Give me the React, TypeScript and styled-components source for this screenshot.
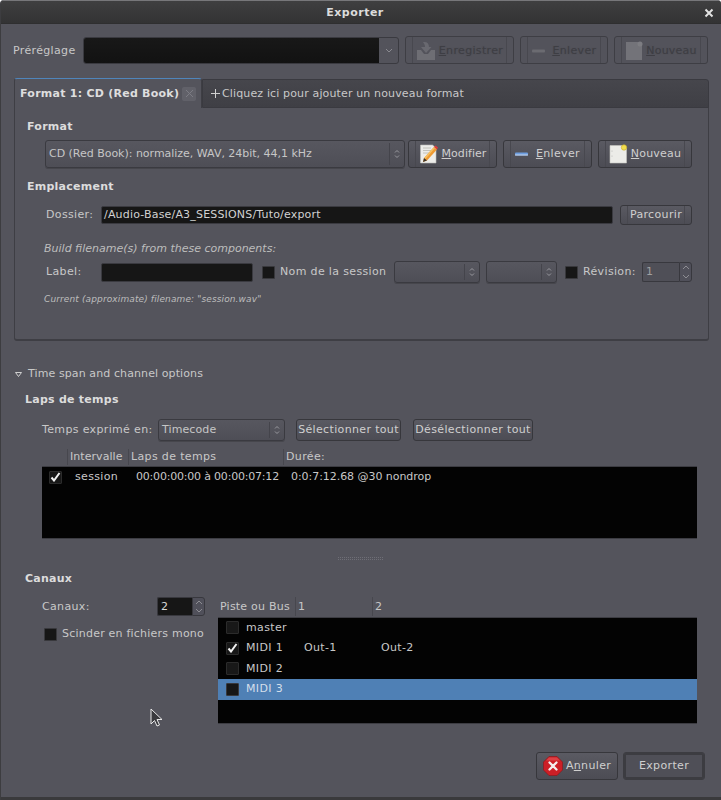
import React from "react";
import styled, { createGlobalStyle, css } from "styled-components";

const Global = createGlobalStyle`
  html, body { margin: 0; padding: 0; background: #fff; }
  #root { width: 721px; height: 800px; }
`;

const Window = styled.div`
  position: relative;
  box-sizing: border-box;
  width: 721px;
  height: 800px;
  display: flex;
  flex-direction: column;
  overflow: hidden;
  border-left: 1px solid #3d3d40;
  border-radius: 4px 4px 0 0;
  background: #54545c;
  color: #c8c8c8;
  font: 11px/14px "DejaVu Sans", sans-serif;
  letter-spacing: 0.35px;
`;

const Spaced = styled.span<{ $ls: number }>`
  letter-spacing: ${(p) => p.$ls}px;
  white-space: nowrap;
`;

const TitleBar = styled.div`
  position: relative;
  box-sizing: border-box;
  height: 24px;
  flex: none;
  display: flex;
  align-items: center;
  justify-content: center;
  margin-left: -1px;
  padding: 1px 11px 0 0;
  background: linear-gradient(#3f3f40, #333334);
  border-top: 1px solid #77777a;
  border-bottom: 1px solid #2f2f30;
  color: #dcdcdc;
  font-weight: bold;
  font-size: 11px;
  letter-spacing: 0.5px;
`;

const CloseGlyph = styled.svg`
  position: absolute;
  right: 7px;
  top: 7px;
`;

const Body = styled.div`
  flex: 1;
  display: flex;
  flex-direction: column;
  padding: 12px 11px 0 12px;
`;

const PresetRow = styled.div`
  display: flex;
  align-items: center;
  height: 28px;
  gap: 6px;
  & > * {
    padding-top: 1px;
  }
`;

const PresetLabel = styled.div`
  width: 64px;
`;

const PresetCombo = styled.div`
  box-sizing: border-box;
  width: 316px;
  height: 27px;
  display: flex;
  border: 1px solid #3a3a40;
  border-radius: 3px;
  background: #53535b;
  && {
    padding-top: 0;
  }
`;

const PresetField = styled.div`
  width: 295px;
  background: linear-gradient(#181818, #121212);
  border-radius: 2px 0 0 2px;
`;

const PresetArrow = styled.div`
  flex: 1;
  display: flex;
  align-items: center;
  justify-content: center;
`;

const Button = styled.div<{ $w: number; $h?: number; $off?: boolean; $flat?: boolean; $ml?: number }>`
  position: relative;
  box-sizing: border-box;
  flex: none;
  width: ${(p) => p.$w}px;
  height: ${(p) => p.$h ?? 28}px;
  margin-left: ${(p) => p.$ml ?? 0}px;
  display: flex;
  align-items: center;
  justify-content: center;
  gap: 3px;
  border: 1px solid #37373c;
  border-radius: 3px;
  background: linear-gradient(#5a5a62, #4c4c54);
  color: #cfcfcf;
  ${(p) =>
    p.$off &&
    css`
      color: #3e3e44;
      background: #53535b;
      border-color: #3e3e44;
      text-shadow: 0 0 1px #48484e;
    `}
  ${(p) =>
    !p.$flat &&
    css`
      &::before,
      &::after {
        content: "";
        position: absolute;
        top: 0;
        bottom: 0;
        width: 6px;
      }
      &::before {
        left: 0;
        border-right: 1px solid #48484f;
      }
      &::after {
        right: 0;
        border-left: 1px solid #48484f;
      }
    `}
`;

const DefaultButton = styled(Button)`
  border: 1px solid #3c3c41;
  box-shadow: inset 0 0 0 2px #3c3c41;
  background: #4f4f57;
`;

const Notebook = styled.div`
  margin: 15px 1px 0;
`;

const TabStrip = styled.div`
  display: flex;
  height: 29px;
`;

const ActiveTab = styled.div`
  box-sizing: border-box;
  position: relative;
  z-index: 1;
  width: 188px;
  height: 30px;
  margin-top: -1px;
  display: flex;
  align-items: center;
  padding: 0 5px 0 5px;
  justify-content: space-between;
  border-top: 1px solid #4f85bb;
  border-left: 1px solid #3e3e44;
  border-right: 1px solid #3e3e44;
  border-radius: 3px 3px 0 0;
  background: #54545c;
  color: #dedede;
  font-weight: bold;
  letter-spacing: 0.25px;
  white-space: nowrap;
`;

const TabClose = styled.div`
  box-sizing: border-box;
  width: 14px;
  height: 14px;
  display: flex;
  align-items: center;
  justify-content: center;
  border-radius: 2px;
  background: #616169;
`;

const TabRest = styled.div`
  box-sizing: border-box;
  flex: 1;
  display: flex;
  align-items: center;
  padding-left: 7px;
  gap: 1px;
  border: 1px solid #3a3a40;
  border-radius: 0 3px 0 0;
  background: linear-gradient(#46464c, #3f3f45);
`;

const Panel = styled.div`
  box-sizing: border-box;
  height: 234px;
  padding: 13px 0 0 12px;
  margin-top: -1px;
  border: 1px solid #3e3e44;
  border-top: none;
  border-bottom: 2px solid #3e3e44;
  border-radius: 0 0 3px 3px;
`;

const Heading = styled.div<{ $top?: number; $left?: number }>`
  margin-top: ${(p) => p.$top ?? 0}px;
  margin-left: ${(p) => p.$left ?? 0}px;
  color: #dcdcdc;
  font-weight: bold;
  letter-spacing: 0.25px;
`;

const FormRow = styled.div<{ $top: number; $left: number; $h: number; $gap?: number }>`
  display: flex;
  align-items: center;
  margin-top: ${(p) => p.$top}px;
  margin-left: ${(p) => p.$left}px;
  height: ${(p) => p.$h}px;
  gap: ${(p) => p.$gap ?? 0}px;
`;

const Combo = styled.div<{ $w: number; $h?: number; $ml?: number }>`
  position: relative;
  box-sizing: border-box;
  flex: none;
  width: ${(p) => p.$w}px;
  height: ${(p) => p.$h ?? 28}px;
  margin-left: ${(p) => p.$ml ?? 0}px;
  display: flex;
  align-items: center;
  padding-left: 3px;
  border: 1px solid #3a3a40;
  border-radius: 3px;
  background: linear-gradient(#57575f, #4e4e56);
  color: #c6c6c6;
  box-shadow: 0 1px 0 #46464c;
  white-space: nowrap;
`;

const ComboArrow = styled.svg`
  position: absolute;
  right: 0;
  top: 50%;
  transform: translateY(-50%);
`;

const ComboSep = styled.div`
  position: absolute;
  top: 2px;
  bottom: 2px;
  right: 14px;
  width: 1px;
  background: #44444b;
`;

const FieldLabel = styled.div<{ $w: number; $ml?: number }>`
  flex: none;
  width: ${(p) => p.$w}px;
  margin-left: ${(p) => p.$ml ?? 0}px;
  white-space: nowrap;
`;

const Entry = styled.div<{ $w: number; $h: number }>`
  box-sizing: border-box;
  flex: none;
  width: ${(p) => p.$w}px;
  height: ${(p) => p.$h}px;
  padding-left: 2px;
  display: flex;
  align-items: center;
  border: 1px solid #3a3a40;
  border-radius: 2px;
  background: #161616;
  color: #d2d2d2;
`;

const Check = styled.div<{ $ml?: number }>`
  box-sizing: border-box;
  flex: none;
  width: 13px;
  height: 13px;
  margin-left: ${(p) => p.$ml ?? 0}px;
  display: flex;
  align-items: center;
  justify-content: center;
  border: 1px solid #38383c;
  border-radius: 1px;
  background: #161616;
`;

const Hint = styled.div<{ $top: number; $small?: boolean }>`
  margin-top: ${(p) => p.$top}px;
  margin-left: 17px;
  font-style: italic;
  color: #bdbdbd;
  font-size: ${(p) => (p.$small ? "9px" : "11px")};
  letter-spacing: ${(p) => (p.$small ? "0.12px" : "0px")};
`;

const Spin = styled.div<{ $w: number; $h: number; $dim?: boolean }>`
  box-sizing: border-box;
  flex: none;
  width: ${(p) => p.$w}px;
  height: ${(p) => p.$h}px;
  display: flex;
  color: ${(p) => (p.$dim ? "#a0a0a0" : "#d8d8d8")};
`;

const SpinField = styled.div<{ $dim?: boolean }>`
  flex: 1;
  display: flex;
  align-items: center;
  padding-left: 3px;
  border-radius: 2px 0 0 2px;
  background: ${(p) => (p.$dim ? "#4f4f57" : "#161616")};
  border: 1px solid #38383e;
  border-right: none;
`;

const SpinButtons = styled.div`
  box-sizing: border-box;
  width: 13px;
  display: flex;
  flex-direction: column;
  align-items: center;
  justify-content: space-around;
  border: 1px solid #38383e;
  border-radius: 0 3px 3px 0;
  background: #50505a;
`;

const Expander = styled.div`
  display: flex;
  align-items: center;
  gap: 6px;
  margin: 26px 0 0 2px;
`;

const ColumnHeader = styled.div<{ $top: number; $left: number; $h: number }>`
  display: flex;
  height: ${(p) => p.$h}px;
  margin-top: ${(p) => p.$top}px;
  margin-left: ${(p) => p.$left}px;
`;

const HeadCell = styled.div<{ $w?: number; $sep?: boolean }>`
  box-sizing: border-box;
  flex: none;
  width: ${(p) => (p.$w ? `${p.$w}px` : "auto")};
  padding-left: 2px;
  display: flex;
  align-items: center;
  white-space: nowrap;
  ${(p) =>
    p.$sep &&
    css`
      border-left: 1px solid #47474e;
    `}
`;

const ListBox = styled.div<{ $w: number; $h: number; $top?: number; $ml?: number }>`
  box-sizing: border-box;
  width: ${(p) => p.$w}px;
  height: ${(p) => p.$h}px;
  margin-top: ${(p) => p.$top ?? 0}px;
  margin-left: ${(p) => p.$ml ?? 0}px;
  background: #030303;
  border: 1px solid #3c3c42;
  border-width: 1px 0;
`;

const TimeRow = styled.div`
  display: grid;
  grid-template-columns: 26px 61px 155px 1fr;
  align-items: center;
  height: 20px;
  padding-left: 7px;
  white-space: nowrap;
`;

const ListCheck = styled(Check)`
  background: #181818;
  border-color: #2b2b2b;
`;

const Grip = styled.div`
  width: 45px;
  height: 4px;
  margin: 18px 0 0 325px;
  background-image: radial-gradient(circle at 0.5px 0.5px, #6e6e76 0.6px, transparent 0.8px);
  background-size: 2px 2px;
`;

const ChannelArea = styled.div`
  display: grid;
  grid-template-columns: 176px 479px;
  margin: 11px 0 0 29px;
`;

const LeftColumn = styled.div`
  display: flex;
  flex-direction: column;
`;

const LeftRow = styled.div<{ $top?: number; $left?: number; $gap?: number }>`
  display: flex;
  align-items: center;
  margin-top: ${(p) => p.$top ?? 0}px;
  margin-left: ${(p) => p.$left ?? 0}px;
  gap: ${(p) => p.$gap ?? 0}px;
`;

const TrackRow = styled.div<{ $selected?: boolean }>`
  display: grid;
  grid-template-columns: 20px 58px 77px 1fr;
  align-items: center;
  height: 20.5px;
  padding-left: 8px;
  ${(p) =>
    p.$selected &&
    css`
      background: #4f80b5;
      color: #d4dfeb;
    `}
`;

const Footer = styled.div`
  display: flex;
  justify-content: flex-end;
  gap: 5px;
  margin: 28px 5px 0 0;
`;

const BottomEdge = styled.div`
  flex: none;
  height: 3px;
  margin-left: -1px;
  margin-top: auto;
  background: #3a3a3c;
`;

const Cursor = styled.svg`
  position: absolute;
  left: 148px;
  top: 708px;
`;

const ArrowUpDown = () => (
  <ComboArrow width="14" height="12" viewBox="0 0 14 12">
    <path d="M5 4.500 7 2.500 9 4.500M5 7.500 7 9.500 9 7.500" fill="none" stroke="#9a9aa0" strokeWidth="1" />
  </ComboArrow>
);

const SaveIcon = () => (
  <svg width="20" height="20" viewBox="0 0 20 20">
    <path d="M1 9h4l3 4h4l3-4h4v10H1z" fill="#6e6e74" />
    <path d="M7 1c4-.5 6 1.500 6 5h2.500L10 12 5 6h4c0-2-1-3.500-2-5z" fill="#696970" />
  </svg>
);

const MinusIcon = ({ on }: { on?: boolean }) => (
  <svg width="14" height="4" viewBox="0 0 14 4">
    <rect x="0" y="0.500" width="13" height="3" rx="1" fill={on ? "#6d9ee0" : "#6b6b71"} />
    {on && <rect x="0" y="2.500" width="13" height="1" fill="#c9d6ea" />}
  </svg>
);

const DisabledNewIcon = () => (
  <svg width="18" height="20" viewBox="0 0 18 20">
    <path d="M1 1h13l3 3v15H1z" fill="#737379" />
    <circle cx="15" cy="3" r="2.500" fill="#7d7d82" />
  </svg>
);

const EditIcon = () => (
  <svg width="20" height="20" viewBox="0 0 20 20">
    <path d="M1.500 1h12l3.500 3v15H1.500z" fill="#ededea" stroke="#bdbdb8" strokeWidth="0.6" />
    <path d="M4 4h8M4 6.500h9M4 9h6" stroke="#b8b8b0" strokeWidth="0.8" />
    <path d="M5 14 15 3l3 2.500L8 16.500l-4 1.500z" fill="#ee9a33" />
    <path d="M5 14 15 3l1 1L6 15.500z" fill="#f7c060" />
    <path d="M15 3l1.500-1.500 2.500 2L18 5.500z" fill="#d83c3c" />
    <path d="M5 14l-1 4 4-1.500z" fill="#3a3228" />
  </svg>
);

const NewIcon = () => (
  <svg width="19" height="20" viewBox="0 0 19 20">
    <path d="M1 1.500h13l3.500 3V19H1z" fill="#ecece8" stroke="#c6c6c0" strokeWidth="0.6" />
    <circle cx="15" cy="3.500" r="2.700" fill="#f1dd4e" stroke="#c9ac2a" strokeWidth="0.6" />
    <circle cx="3" cy="7" r="0.500" fill="#aaa" />
    <circle cx="3" cy="12" r="0.500" fill="#aaa" />
  </svg>
);

const StopIcon = () => (
  <svg width="20" height="20" viewBox="0 0 20 20">
    <path d="M6 0.500h8L19.500 6v8L14 19.500H6L0.500 14V6z" fill="#cc1f26" stroke="#8e1216" strokeWidth="0.6" />
    <path d="M6 1.500h8l3 3H3z" fill="#e8565a" opacity="0.6" />
    <path d="M6.500 6.500l7 7M13.500 6.500l-7 7" stroke="#f4eded" strokeWidth="2.300" strokeLinecap="round" />
  </svg>
);

const Tick = () => (
  <svg width="11" height="10" viewBox="0 0 11 10">
    <path d="M1.500 5.500 4 8.500 9.500 1" fill="none" stroke="#f2f2f2" strokeWidth="2" />
  </svg>
);

const SpinArrows = () => (
  <>
    <svg width="8" height="5" viewBox="0 0 8 5"><path d="M1 4 4 1l3 3" fill="none" stroke="#8d8d93" /></svg>
    <svg width="8" height="5" viewBox="0 0 8 5"><path d="M1 1l3 3 3-3" fill="none" stroke="#8d8d93" /></svg>
  </>
);

export default function App() {
  return (
    <>
      <Global />
      <Window>
        <TitleBar>
          Exporter
          <CloseGlyph width="10" height="10" viewBox="0 0 10 10">
            <path d="M1.500 1.500l7 7M8.500 1.500l-7 7" stroke="#e2e2e2" strokeWidth="2" />
          </CloseGlyph>
        </TitleBar>
        <Body>
          <PresetRow>
            <PresetLabel>Préréglage</PresetLabel>
            <PresetCombo>
              <PresetField />
              <PresetArrow>
                <svg width="8" height="5" viewBox="0 0 8 5"><path d="M1 1l3 3 3-3" fill="none" stroke="#8a8a90" /></svg>
              </PresetArrow>
            </PresetCombo>
            <Button $w={109} $off><SaveIcon /><span><u>E</u>nregistrer</span></Button>
            <Button $w={88} $off><MinusIcon /><span>&nbsp;<u>E</u>nlever</span></Button>
            <Button $w={94} $off><DisabledNewIcon /><Spaced $ls={0.2}><u>N</u>ouveau</Spaced></Button>
          </PresetRow>

          <Notebook>
            <TabStrip>
              <ActiveTab>
                Format 1: CD (Red Book)
                <TabClose>
                  <svg width="9" height="9" viewBox="0 0 9 9"><path d="M1 1l7 7M8 1 1 8" stroke="#7c7c84" /></svg>
                </TabClose>
              </ActiveTab>
              <TabRest>
                <svg width="11" height="11" viewBox="0 0 11 11"><path d="M5.500 1v9M1 5.500h9" stroke="#d0d0d0" /></svg>
                <Spaced $ls={0.14}>Cliquez ici pour ajouter un nouveau format</Spaced>
              </TabRest>
            </TabStrip>
            <Panel>
              <Heading>Format</Heading>
              <FormRow $top={6} $left={18} $h={28} $gap={3}>
                <Combo $w={360}><Spaced $ls={-0.02}>CD (Red Book): normalize, WAV, 24bit, 44,1 kHz</Spaced><ComboSep /><ArrowUpDown /></Combo>
                <Button $w={89}><EditIcon /><Spaced $ls={0.05}><u>M</u>odifier</Spaced></Button>
                <Button $w={89} $ml={3}><MinusIcon on /><span>&nbsp;<u>E</u>nlever</span></Button>
                <Button $w={94} $ml={3}><NewIcon /><Spaced $ls={0.2}><u>N</u>ouveau</Spaced></Button>
              </FormRow>
              <Heading $top={12}>Emplacement</Heading>
              <FormRow $top={11} $left={19} $h={20}>
                <FieldLabel $w={55}>Dossier:</FieldLabel>
                <Entry $w={512} $h={18}><Spaced $ls={0.18}>/Audio-Base/A3_SESSIONS/Tuto/export</Spaced></Entry>
                <Button $w={72} $h={20} $ml={7}>Parcourir</Button>
              </FormRow>
              <Hint $top={17}>Build filename(s) from these components:</Hint>
              <FormRow $top={5} $left={19} $h={22}>
                <FieldLabel $w={55}>Label:</FieldLabel>
                <Entry $w={152} $h={19} />
                <Check $ml={9} />
                <FieldLabel $w={114} $ml={5}>Nom de la session</FieldLabel>
                <Combo $w={86} $h={22}><ComboSep /><ArrowUpDown /></Combo>
                <Combo $w={71} $h={22} $ml={6}><ComboSep /><ArrowUpDown /></Combo>
                <Check $ml={8} />
                <FieldLabel $w={59} $ml={5}>Révision:</FieldLabel>
                <Spin $w={50} $h={20} $dim>
                  <SpinField $dim>1</SpinField>
                  <SpinButtons><SpinArrows /></SpinButtons>
                </Spin>
              </FormRow>
              <Hint $top={9} $small>Current (approximate) filename: "session.wav"</Hint>
            </Panel>
          </Notebook>

          <Expander>
            <svg width="7" height="5" viewBox="0 0 7 5"><path d="M0.500 0.500h6L3.500 4.500z" fill="none" stroke="#d0d0d0" /></svg>
            <Spaced $ls={0.1}>Time span and channel options</Spaced>
          </Expander>
          <Heading $top={12} $left={12}>Laps de temps</Heading>
          <FormRow $top={12} $left={29} $h={22}>
            <FieldLabel $w={116}>Temps exprimé en:</FieldLabel>
            <Combo $w={127} $h={22}><Spaced $ls={0.1}>Timecode</Spaced><ComboSep /><ArrowUpDown /></Combo>
            <Button $w={105} $h={22} $flat $ml={11}>Sélectionner tout</Button>
            <Button $w={120} $h={22} $flat $ml={12}>Désélectionner tout</Button>
          </FormRow>
          <ColumnHeader $top={8} $left={54} $h={16}>
            <HeadCell $w={61} $sep><Spaced $ls={0.05}>Intervalle</Spaced></HeadCell>
            <HeadCell $w={155} $sep>Laps de temps</HeadCell>
            <HeadCell $sep>Durée:</HeadCell>
          </ColumnHeader>
          <ListBox $w={655} $h={73} $top={1} $ml={29}>
            <TimeRow>
              <ListCheck><Tick /></ListCheck>
              <span>session</span>
              <Spaced $ls={-0.2}>00:00:00:00 à 00:00:07:12</Spaced>
              <Spaced $ls={-0.05}>0:0:7:12.68 @30 nondrop</Spaced>
            </TimeRow>
          </ListBox>
          <Grip />
          <Heading $top={11} $left={12}>Canaux</Heading>
          <ChannelArea>
            <LeftColumn>
              <LeftRow>
                <FieldLabel $w={115}>Canaux:</FieldLabel>
                <Spin $w={48} $h={19}>
                  <SpinField>2</SpinField>
                  <SpinButtons><SpinArrows /></SpinButtons>
                </Spin>
              </LeftRow>
              <LeftRow $top={11} $left={2} $gap={5}>
                <Check />
                <Spaced $ls={0.22}>Scinder en fichiers mono</Spaced>
              </LeftRow>
            </LeftColumn>
            <div>
              <ColumnHeader $top={0} $left={0} $h={19}>
                <HeadCell $w={77}><Spaced $ls={0.22}>Piste ou Bus</Spaced></HeadCell>
                <HeadCell $w={77} $sep>1</HeadCell>
                <HeadCell $sep>2</HeadCell>
              </ColumnHeader>
              <ListBox $w={479} $h={107.5} $top={0.5}>
                <TrackRow><ListCheck /><span>master</span></TrackRow>
                <TrackRow><ListCheck><Tick /></ListCheck><span>MIDI 1</span><span>Out-1</span><span>Out-2</span></TrackRow>
                <TrackRow><ListCheck /><span>MIDI 2</span></TrackRow>
                <TrackRow $selected><Check /><span>MIDI 3</span></TrackRow>
              </ListBox>
            </div>
          </ChannelArea>
          <Footer>
            <Button $w={82} $flat><StopIcon /><span>A<u>n</u>nuler</span></Button>
            <DefaultButton $w={82} $flat>Exporter</DefaultButton>
          </Footer>
        </Body>
        <BottomEdge />
        <Cursor width="16" height="20" viewBox="0 0 16 20">
          <path d="M2 1v15l3.500-3.500 2.500 5.500 2.500-1-2.500-5.500h5z" fill="#3a3a3e" stroke="#e8e8e8" strokeWidth="1" />
        </Cursor>
      </Window>
    </>
  );
}
